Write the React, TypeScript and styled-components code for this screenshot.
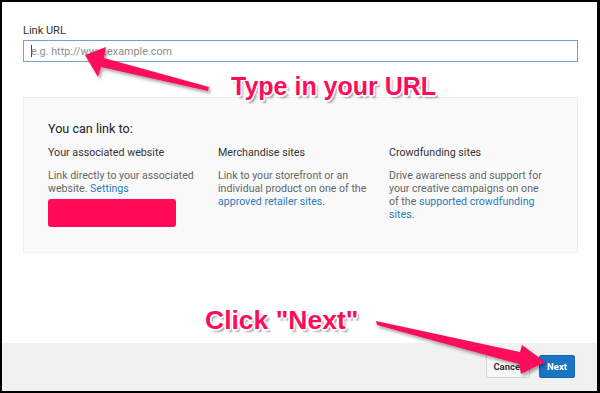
import React from "react";
import styled, { createGlobalStyle } from "styled-components";

const Global = createGlobalStyle`
  html, body { margin: 0; padding: 0; background: #fff; }
  * { box-sizing: border-box; }
`;

const Frame = styled.div`
  position: relative;
  width: 600px;
  height: 393px;
  border: 2px solid #000;
  border-right-width: 3px;
  display: flex;
  flex-direction: column;
  background: #fff;
  font-family: Roboto, "Liberation Sans", Arial, sans-serif;
  overflow: hidden;
`;

const Main = styled.div`
  flex: 1;
  padding: 22px 19px 0 21px;
  display: flex;
  flex-direction: column;
`;

const Label = styled.label`
  font-size: 11px;
  line-height: 14px;
  color: #333;
  margin-bottom: 2px;
`;

const Input = styled.div`
  height: 22px;
  border: 1px solid #6aa6d2;
  display: flex;
  align-items: center;
  padding-left: 7px;
  font-size: 10.8px;
  color: #8e8e8e;
`;

const Caret = styled.span`
  display: inline-block;
  width: 1px;
  height: 12px;
  background: #444;
  margin-right: -1px;
`;

const Panel = styled.div`
  margin-top: 35px;
  height: 156px;
  background: #f9f9f9;
  border: 1px solid #eeeeee;
  padding: 23px 10px 0 24px;
`;

const PanelTitle = styled.div`
  font-size: 12.6px;
  line-height: 16px;
  color: #222;
`;

const Columns = styled.div`
  display: grid;
  grid-template-columns: 170px 171px 170px;
  margin-top: 9px;
`;

const Column = styled.div`
  padding-right: 8px;
`;

const ColTitle = styled.div`
  font-size: 10.7px;
  line-height: 14px;
  color: #333;
`;

const ColText = styled.div`
  margin-top: 9px;
  max-width: 156px;
  font-size: 10.6px;
  line-height: 13px;
  color: #666;
`;

const Link = styled.span`
  color: #2b7bbd;
`;

const Redacted = styled.div`
  margin-top: 4px;
  width: 128px;
  height: 28px;
  border-radius: 3px;
  background: #fe0a57;
`;

const Footer = styled.div`
  height: 48px;
  background: #f1f1f1;
  display: flex;
  justify-content: flex-end;
  align-items: flex-start;
  gap: 9px;
  padding: 12px 22px 0 0;
`;

const Button = styled.button<{ $primary?: boolean }>`
  height: 23px;
  padding: 0;
  width: ${(p) => (p.$primary ? "36px" : "44px")};
  border-radius: 2px;
  border: 1px solid ${(p) => (p.$primary ? "#1268ad" : "#d3d3d3")};
  background: ${(p) => (p.$primary ? "#1a74c4" : "#f8f8f8")};
  color: ${(p) => (p.$primary ? "#fff" : "#333")};
  font-family: Roboto, "Liberation Sans", Arial, sans-serif;
  font-size: 9.5px;
  font-weight: 700;
`;

const Callout = styled.div<{ $x: number; $y: number; $size: number }>`
  position: absolute;
  left: ${(p) => p.$x}px;
  top: ${(p) => p.$y}px;
  font-family: "Liberation Sans", Arial, sans-serif;
  font-weight: 700;
  font-size: ${(p) => p.$size}px;
  line-height: 28px;
  white-space: nowrap;
  color: #fd0c5b;
  text-shadow:
    1.5px 0 0 #fff, -1.5px 0 0 #fff, 0 1.5px 0 #fff, 0 -1.5px 0 #fff,
    1.2px 1.2px 0 #fff, -1.2px 1.2px 0 #fff, 1.2px -1.2px 0 #fff, -1.2px -1.2px 0 #fff,
    2.5px 2.5px 2px rgba(0, 0, 0, 0.35);
`;

const Overlay = styled.svg`
  position: absolute;
  left: -2px;
  top: -2px;
  width: 600px;
  height: 393px;
  pointer-events: none;
`;

export default function App() {
  return (
    <>
      <Global />
      <Frame>
        <Main>
          <Label>Link URL</Label>
          <Input>
            <Caret />
            e.g. http://www.example.com
          </Input>
          <Panel>
            <PanelTitle>You can link to:</PanelTitle>
            <Columns>
              <Column>
                <ColTitle>Your associated website</ColTitle>
                <ColText>
                  Link directly to your associated website. <Link>Settings</Link>
                </ColText>
                <Redacted />
              </Column>
              <Column>
                <ColTitle>Merchandise sites</ColTitle>
                <ColText>
                  Link to your storefront or an individual product on one of the{" "}
                  <Link>approved retailer sites.</Link>
                </ColText>
              </Column>
              <Column>
                <ColTitle>Crowdfunding sites</ColTitle>
                <ColText>
                  Drive awareness and support for your creative campaigns on one of the{" "}
                  <Link>supported crowdfunding sites.</Link>
                </ColText>
              </Column>
            </Columns>
          </Panel>
        </Main>
        <Footer>
          <Button>Cancel</Button>
          <Button $primary>Next</Button>
        </Footer>
        <Overlay viewBox="0 0 600 393">
          <defs>
            <filter id="sh" x="-20%" y="-50%" width="140%" height="200%">
              <feDropShadow dx="2" dy="2.5" stdDeviation="1.5" floodColor="#000" floodOpacity="0.35" />
            </filter>
          </defs>
          <polygon
            points="85,55 106,47 104,58 209,87 208,91 101,67 98,77"
            fill="#fd0c5b"
            filter="url(#sh)"
          />
          <polygon
            points="376,321 520,352 522,345 545,362 521,374 519,364 377,325"
            fill="#fd0c5b"
            filter="url(#sh)"
          />
        </Overlay>
        <Callout $x={229} $y={70} $size={25}>Type in your URL</Callout>
        <Callout $x={203} $y={304} $size={26.5}>Click "Next"</Callout>
      </Frame>
    </>
  );
}
